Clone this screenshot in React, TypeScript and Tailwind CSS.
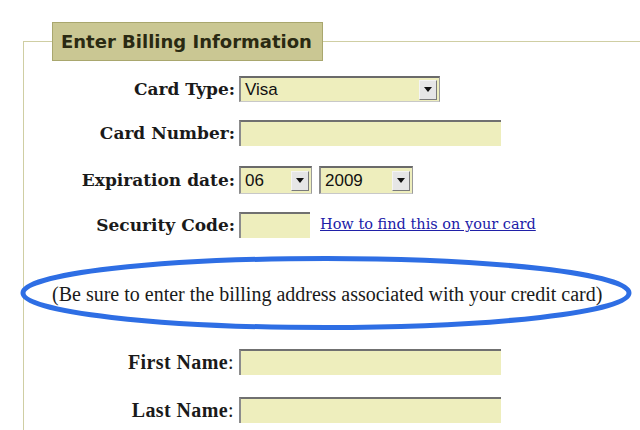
import React from "react";

const times = { fontFamily: '"Liberation Serif", "Times New Roman", serif' };
const dserif = { fontFamily: '"DejaVu Serif", Georgia, serif' };

function Arrow() {
  return (
    <div className="flex h-[20px] w-[18px] items-center justify-center border border-t-[#f4f4f4] border-l-[#f4f4f4] border-r-[#7a7a7a] border-b-[#7a7a7a] bg-[#e6e6e6]">
      <svg width="8" height="5" viewBox="0 0 8 5">
        <path d="M0 0 L8 0 L4 5 Z" fill="#111" />
      </svg>
    </div>
  );
}

function Select({ value, width, height = "h-[26px]" }: { value: string; width: string; height?: string }) {
  return (
    <div
      className={`flex ${height} ${width} items-center justify-between border-t-2 border-l-2 border-r border-b border-t-[#6a6a6a] border-l-[#8c8c8c] border-r-[#9a9a9a] border-b-[#c8c8c8] bg-[#eeeebd] pl-[4px] pr-[2px]`}
    >
      <span className="text-[17px] text-[#111]" style={{ fontFamily: '"Liberation Sans", Arial, sans-serif' }}>
        {value}
      </span>
      <Arrow />
    </div>
  );
}

function Input({ width }: { width: string }) {
  return (
    <div
      className={`h-[26px] ${width} border-t-2 border-l-2 border-t-[#707070] border-l-[#8c8c8c] bg-[#eeeebd]`}
    />
  );
}

function Label({ children }: { children: React.ReactNode }) {
  return (
    <div className="w-[215px] pr-[4px] text-right text-[17px] font-bold leading-[24px] text-[#1a1a1a]" style={dserif}>
      {children}
    </div>
  );
}

function TLabel({ children }: { children: React.ReactNode }) {
  return (
    <div
      className="w-[215px] pr-[5px] text-right text-[20px] font-bold tracking-[0.4px] text-[#1a1a1a]"
      style={times}
    >
      {children}
    </div>
  );
}

export default function App() {
  return (
    <div className="h-[430px] w-[640px] overflow-hidden bg-white pt-[22px]">
      <fieldset className="ml-[23px] border-l border-t border-[#cfcea3] pb-[10px]">
        <legend className="ml-[28px] border border-[#a9a76e] bg-[#cac793] pl-[8px] pr-[10px] py-[8px]">
          <span
            className="block text-[18px] font-bold leading-[21px] text-[#2a2a12]"
            style={{ fontFamily: '"DejaVu Sans", Verdana, sans-serif' }}
          >
            Enter Billing Information
          </span>
        </legend>
        <div className="flex flex-col">
          <div className="mt-[15px] flex items-center">
            <Label>Card Type:</Label>
            <Select value="Visa" width="w-[201px]" />
          </div>
          <div className="mt-[18px] flex items-center">
            <Label>Card Number:</Label>
            <Input width="w-[262px]" />
          </div>
          <div className="mt-[20px] flex items-center">
            <Label>Expiration date:</Label>
            <Select value="06" width="w-[73px]" height="h-[28px]" />
            <div className="w-[7px]" />
            <Select value="2009" width="w-[94px]" height="h-[28px]" />
          </div>
          <div className="mt-[18px] flex items-center">
            <Label>Security Code:</Label>
            <Input width="w-[71px]" />
            <a
              href="#"
              className="ml-[10px] text-[#2020a8] underline"
              style={{ fontFamily: '"DejaVu Serif", Georgia, serif', fontSize: "14.5px" }}
            >
              How to find this on your card
            </a>
          </div>
          <div className="relative mt-[18px] flex h-[76px] items-center">
            <svg
              className="pointer-events-none absolute left-[-4px] top-0"
              width="616"
              height="76"
              viewBox="0 0 616 76"
            >
              <ellipse cx="306" cy="37" rx="303" ry="34.5" fill="none" stroke="#2e6ee4" strokeWidth="5" />
            </svg>
            <div className="pl-[28px] text-[20px] text-[#1a1a1a]" style={times}>
              (Be sure to enter the billing address associated with your credit card)
            </div>
          </div>
          <div className="mt-[15px] flex items-center">
            <TLabel>
              First Name<span className="font-normal">:</span>
            </TLabel>
            <Input width="w-[262px]" />
          </div>
          <div className="mt-[18px] flex items-center">
            <TLabel>
              Last Name<span className="font-normal">:</span>
            </TLabel>
            <Input width="w-[262px]" />
          </div>
        </div>
      </fieldset>
    </div>
  );
}
